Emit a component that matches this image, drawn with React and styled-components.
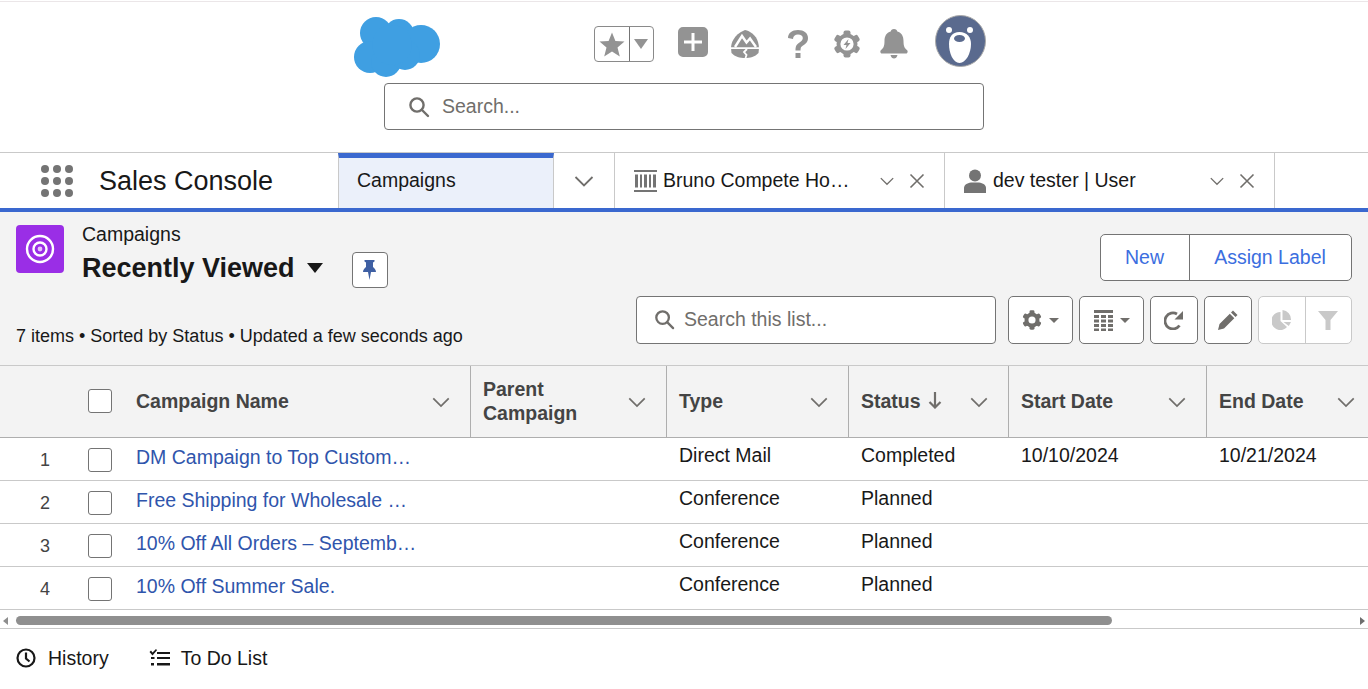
import React from "react";
import styled, { createGlobalStyle } from "styled-components";

const Global = createGlobalStyle`
  html, body { margin: 0; padding: 0; background: #fff; overflow: hidden; }
  body { font-family: "Liberation Sans", Arial, sans-serif; color: #181818; }
  * { box-sizing: border-box; }
`;

const Page = styled.div`
  width: 1368px;
  height: 689px;
  display: flex;
  flex-direction: column;
  overflow: hidden;
`;

/* ---------- Global header ---------- */
const Header = styled.header`
  height: 152px;
  flex: none;
  margin-top: 1px;
  border-top: 1px solid #ebe6e8;
  border-bottom: 1px solid #c9c9c9;
  background: #fff;
  padding: 12px 0 0 354px;
`;
const TopRow = styled.div`
  height: 69px;
  display: flex;
  align-items: flex-start;
`;
const Logo = styled.svg`
  width: 86px;
  height: 60px;
  margin-top: 3px;
  flex: none;
`;
const FavGroup = styled.div`
  display: flex;
  width: 60px;
  height: 36px;
  margin: 12px 0 0 154px;
  border: 1px solid #8a8a8a;
  border-radius: 4px;
  flex: none;
`;
const FavCell = styled.div`
  flex: ${(p) => p.$flex};
  display: flex;
  align-items: center;
  justify-content: center;
  & + & { border-left: 1px solid #747474; }
`;
const HeadIcon = styled.svg`
  flex: none;
  width: ${(p) => p.$w}px;
  height: ${(p) => p.$h}px;
  margin-left: ${(p) => p.$ml}px;
  margin-top: ${(p) => p.$mt}px;
  fill: #939393;
`;
const GlobalSearch = styled.div`
  width: 600px;
  height: 47px;
  margin-left: 30px;
  border: 1px solid #747474;
  border-radius: 4px;
  display: flex;
  align-items: center;
  padding-left: 23px;
  gap: 12px;
  font-size: 19.5px;
  color: #706e6b;
  background: #fff;
`;

/* ---------- Tabs ---------- */
const TabBar = styled.nav`
  height: 59px;
  flex: none;
  display: flex;
  border-bottom: 4px solid #3a68cf;
  background: #fff;
`;
const AppArea = styled.div`
  width: 338px;
  flex: none;
  display: flex;
  align-items: center;
  padding-left: 41px;
`;
const Waffle = styled.div`
  display: grid;
  grid-template-columns: repeat(3, 8px);
  gap: 4px;
  width: 32px;
  margin-right: 26px;
`;
const Dot = styled.i`
  width: 8px;
  height: 8px;
  border-radius: 50%;
  background: #747474;
`;
const AppName = styled.div`
  font-size: 27px;
  color: #181818;
  padding-top: 1px;
`;
const Tab = styled.div`
  width: ${(p) => p.$w}px;
  flex: none;
  display: flex;
  align-items: center;
  font-size: 19.5px;
  padding-left: ${(p) => p.$pl}px;
  border-right: 1px solid #c9c9c9;
  justify-content: ${(p) => (p.$center ? "center" : "flex-start")};
  color: #181818;
`;
const ActiveTab = styled(Tab)`
  background: #ebf0fa;
  border-left: 1px solid #c9c9c9;
  border-top: 5px solid #3a68cf;
  padding-bottom: 5px;
`;
const TabLabel = styled.span`
  width: 187px;
  flex: none;
  white-space: nowrap;
  margin-left: ${(p) => p.$ml}px;
`;
const TabAction = styled.svg`
  flex: none;
  width: ${(p) => p.$s}px;
  height: ${(p) => p.$s}px;
  margin-left: ${(p) => p.$ml || 0}px;
  fill: none;
  stroke: #706e6b;
  stroke-width: ${(p) => p.$sw || 1.6};
`;

/* ---------- List header ---------- */
const ListHeader = styled.section`
  height: 154px;
  flex: none;
  background: #f3f3f3;
  padding: 13px 16px 0 16px;
  border-bottom: 1px solid #c9c9c9;
`;
const ListTop = styled.div`
  height: 71px;
  display: flex;
  justify-content: space-between;
`;
const TitleArea = styled.div`
  display: flex;
`;
const ObjectIcon = styled.div`
  width: 48px;
  height: 48px;
  background: #9a2ee6;
  border-radius: 4px;
  display: flex;
  align-items: center;
  justify-content: center;
  margin-right: 18px;
`;
const Crumb = styled.div`
  font-size: 19.5px;
  line-height: 20px;
  margin-top: -1px;
`;
const TitleRow = styled.div`
  display: flex;
  align-items: flex-start;
  margin-top: 8px;
`;
const Title = styled.div`
  font-size: 27px;
  font-weight: 700;
  line-height: 32px;
  white-space: nowrap;
`;
const Caret = styled.i`
  width: 0;
  height: 0;
  border-left: 8px solid transparent;
  border-right: 8px solid transparent;
  border-top: 10px solid #181818;
  margin: 11px 0 0 12px;
`;
const PinButton = styled.div`
  width: 36px;
  height: 36px;
  margin-left: 29px;
  background: #fff;
  border: 1px solid #747474;
  border-radius: 4px;
  display: flex;
  align-items: center;
  justify-content: center;
`;
const ActionGroup = styled.div`
  display: flex;
  height: 47px;
  margin-top: 9px;
  background: #fff;
  border: 1px solid #747474;
  border-radius: 5px;
`;
const ActionButton = styled.div`
  display: flex;
  align-items: center;
  justify-content: center;
  width: ${(p) => p.$w}px;
  padding-right: 1px;
  font-size: 19.5px;
  color: #3b6ee0;
  & + & { border-left: 1px solid #747474; }
`;
const ListBottom = styled.div`
  display: flex;
  justify-content: space-between;
  align-items: flex-start;
`;
const Meta = styled.div`
  font-size: 18px;
  line-height: 22px;
  margin-top: 29px;
`;
const Tools = styled.div`
  display: flex;
  gap: 6px;
`;
const ListSearch = styled.div`
  width: 360px;
  height: 48px;
  margin-right: 6px;
  background: #fff;
  border: 1px solid #747474;
  border-radius: 4px;
  display: flex;
  align-items: center;
  gap: 9px;
  padding: 0 0 2px 17px;
  font-size: 19.5px;
  color: #706e6b;
`;
const ToolButton = styled.div`
  width: ${(p) => p.$w}px;
  height: 48px;
  background: #fff;
  border: 1px solid #747474;
  border-radius: 5px;
  display: flex;
  align-items: center;
  justify-content: center;
  gap: 7px;
`;
const DisabledGroup = styled.div`
  width: 94px;
  height: 48px;
  display: flex;
  background: #fff;
  border: 1px solid #c9c9c9;
  border-radius: 5px;
`;
const DisabledCell = styled.div`
  flex: 1;
  display: flex;
  align-items: center;
  justify-content: center;
  & + & { border-left: 1px solid #c9c9c9; }
`;
const MiniCaret = styled.i`
  width: 0;
  height: 0;
  border-left: 5px solid transparent;
  border-right: 5px solid transparent;
  border-top: 5px solid #706e6b;
`;

/* ---------- Table ---------- */
const columns = "76px 48px 346px 196px 182px 160px 198px 162px";
const HeadRow = styled.div`
  height: 72px;
  display: grid;
  grid-template-columns: ${columns};
  background: #f3f3f3;
  border-bottom: 1px solid #aeaeae;
  flex: none;
`;
const HeadCell = styled.div`
  display: flex;
  align-items: center;
  justify-content: space-between;
  padding: 0 ${(p) => p.$pr ?? 19}px 0 ${(p) => p.$pl ?? 12}px;
  font-size: 19.5px;
  font-weight: 700;
  line-height: 24px;
  color: #444444;
  border-left: ${(p) => (p.$line ? "1px solid #aeaeae" : "none")};
`;
const HeadText = styled.span`
  display: flex;
  align-items: center;
  gap: 7px;
  white-space: pre-line;
  margin-top: -2px;
`;
const Row = styled.div`
  height: 43px;
  display: grid;
  grid-template-columns: ${columns};
  border-bottom: 1px solid #c9c9c9;
  background: #fff;
  flex: none;
  font-size: 19.5px;
  color: #181818;
`;
const NumCell = styled.div`
  font-size: 18px;
  color: #444;
  padding: 11px 26px 0 0;
  text-align: right;
  line-height: 22px;
`;
const BoxCell = styled.div`
  display: flex;
  justify-content: flex-start;
  padding-top: 10px;
  padding-left: 12px;
`;
const Box = styled.i`
  display: block;
  width: 24px;
  height: 24px;
  background: #fff;
  border: 1px solid #747474;
  border-radius: 3px;
`;
const HeadBoxCell = styled.div`
  display: flex;
  align-items: center;
  padding: 0 0 2px 12px;
`;
const LinkCell = styled.div`
  padding: 7px 0 0 12px;
  line-height: 24px;
  color: #2f55ac;
`;
const LinkText = styled.span`
  white-space: nowrap;
`;
const TextCell = styled.div`
  padding: 5px 0 0 13px;
  line-height: 24px;
  white-space: nowrap;
`;

/* ---------- Scrollbar + footer ---------- */
const Scrollbar = styled.div`
  height: 19px;
  flex: none;
  background: #fff;
  border-bottom: 1px solid #c9c9c9;
  display: flex;
  align-items: center;
  padding: 3px 3px 0 3px;
`;
const Arrow = styled.i`
  width: 0;
  height: 0;
  border-top: 4px solid transparent;
  border-bottom: 4px solid transparent;
  ${(p) => (p.$right ? "border-left: 5px solid #6e6e6e;" : "border-right: 5px solid #8e8e8e;")}
`;
const Thumb = styled.div`
  width: 1096px;
  height: 9px;
  margin-left: 8px;
  border-radius: 5px;
  background: #8f8f8f;
`;
const Spacer = styled.div`
  flex: 1;
`;
const Footer = styled.footer`
  flex: 1;
  display: flex;
  align-items: flex-start;
  padding: 17px 0 0 16px;
  background: #fff;
  font-size: 19.5px;
  color: #181818;
`;
const FootItem = styled.div`
  display: flex;
  align-items: center;
  line-height: 24px;
  gap: ${(p) => p.$gap}px;
  margin-right: ${(p) => p.$mr || 0}px;
`;

/* ---------- Icons ---------- */
const Chevron = ({ size = 22, ml, sw = 1.8 }) => (
  <TabAction viewBox="0 0 22 22" $s={size} $ml={ml} $sw={sw}>
    <path d="M2.5 7 L11 15.5 L19.5 7" />
  </TabAction>
);
const Close = ({ ml }) => (
  <TabAction viewBox="0 0 16 16" $s={16} $ml={ml} $sw={1.6}>
    <path d="M1.5 1.5 L14.5 14.5 M14.5 1.5 L1.5 14.5" />
  </TabAction>
);
const Magnifier = ({ size = 22 }) => (
  <svg width={size} height={size} viewBox="0 0 22 22" fill="none" stroke="#706e6b" strokeWidth="2.4">
    <circle cx="9" cy="9" r="6.6" />
    <path d="M14 14 L20 20" strokeLinecap="round" />
  </svg>
);
const GearShape = ({ fill, hole, children }) => (
  <>
    <circle cx="14" cy="14" r="10.5" fill={fill} />
    {[0, 60, 120].map((a) => (
      <rect key={a} x="10.5" y="0.5" width="7" height="27" rx="2" fill={fill} transform={`rotate(${a} 14 14)`} />
    ))}
    <circle cx="14" cy="14" r={hole} fill="#fff" />
    {children}
  </>
);

export default function App() {
  const rows = [
    ["1", "DM Campaign to Top Custom…", "Direct Mail", "Completed", "10/10/2024", "10/21/2024"],
    ["2", "Free Shipping for Wholesale …", "Conference", "Planned", "", ""],
    ["3", "10% Off All Orders – Septemb…", "Conference", "Planned", "", ""],
    ["4", "10% Off Summer Sale.", "Conference", "Planned", "", ""],
  ];
  const heads = [
    ["Campaign Name", 12, false, 19],
    ["Parent\nCampaign", 12, true, 19],
    ["Type", 12, true, 19],
    ["Status", 12, true, 19],
    ["Start Date", 12, true, 19],
    ["End Date", 12, true, 12],
  ];
  return (
    <Page>
      <Global />
      <Header>
        <TopRow>
          <Logo viewBox="354 17 86 60" fill="#3f9fe2">
            <circle cx="376" cy="33" r="16" />
            <circle cx="399" cy="34" r="15" />
            <circle cx="421" cy="44" r="19" />
            <circle cx="370" cy="57" r="16" />
            <circle cx="386" cy="62" r="15" />
            <circle cx="405" cy="55" r="15" />
            <circle cx="392" cy="45" r="20" />
          </Logo>
          <FavGroup>
            <FavCell $flex="35">
              <svg width="26" height="25" viewBox="0 0 26 25" fill="#939393">
                <path d="M13 0.5 L16.4 9 L25.5 9.6 L18.5 15.4 L20.8 24.4 L13 19.4 L5.2 24.4 L7.5 15.4 L0.5 9.6 L9.6 9 Z" />
              </svg>
            </FavCell>
            <FavCell $flex="24">
              <svg width="14" height="10" viewBox="0 0 14 10" fill="#939393">
                <path d="M0 0 H14 L7 10 Z" />
              </svg>
            </FavCell>
          </FavGroup>
          <HeadIcon $w={30} $h={30} $ml={24} $mt={13} viewBox="0 0 30 30">
            <path fillRule="evenodd" d="M5 0 H25 A5 5 0 0 1 30 5 V25 A5 5 0 0 1 25 30 H5 A5 5 0 0 1 0 25 V5 A5 5 0 0 1 5 0 Z M13.5 6 V13.5 H6 V16.5 H13.5 V24 H16.5 V16.5 H24 V13.5 H16.5 V6 Z" />
          </HeadIcon>
          <HeadIcon $w={28} $h={28} $ml={23} $mt={16} viewBox="0 0 28 28">
            <path d="M14 0 C19 1 25 5 27 12 C27.5 14 28 16 28 18 L27.5 23 C24 27 19 28 14 28 C9 28 4 27 0.5 23 L0 18 C0 14 2 5 14 0 Z" />
            <path d="M0 18.2 H28 M16 19 L13 22 L15.5 25 L14.5 28" fill="none" stroke="#fff" strokeWidth="1.800" />
            <path d="M4 17 L11 6 L15.500 12.500 L19 8.500 L25 17" fill="none" stroke="#fff" strokeWidth="2.400" />
          </HeadIcon>
          <HeadIcon $w={22} $h={30} $ml={28} $mt={15} viewBox="0 0 22 30">
            <path d="M1 9 C1 4 5 1 11 1 C17 1 21 4 21 9 C21 13 18.500 15 16 16.500 C14 17.800 13.500 18.500 13.500 21.500 H8.500 C8.500 17 9.500 15.500 12.500 13.500 C14.500 12.200 15.800 11 15.800 9 C15.800 7 14 5.500 11 5.500 C8 5.500 6.200 7 6 10 Z M8.500 24 H13.500 V29 H8.500 Z" />
          </HeadIcon>
          <HeadIcon $w={28} $h={28} $ml={24} $mt={16} viewBox="0 0 28 28">
            <GearShape fill="#939393" hole={6.6}>
              <path d="M15.500 9 L10.500 15 H13.500 L12.500 19 L17.500 13 H14.500 Z" fill="#939393" />
            </GearShape>
          </HeadIcon>
          <HeadIcon $w={28} $h={30} $ml={19} $mt={15} viewBox="0 0 28 30">
            <path d="M14 0 C16 0 17 1 17.300 2.500 C21.500 3.800 23.500 7 23.500 12 C23.500 18 25 19.500 27 21 C28 21.800 28 24.500 26 24.500 H2 C0 24.500 0 21.800 1 21 C3 19.500 4.500 18 4.500 12 C4.500 7 6.500 3.800 10.700 2.500 C11 1 12 0 14 0 Z M10.500 26 H17.500 C17 28.500 15.500 29.500 14 29.500 C12.500 29.500 11 28.500 10.500 26 Z" />
          </HeadIcon>
          <svg width="51" height="52" viewBox="0 0 51 52" style={{ marginLeft: 27, marginTop: 1, flex: "none" }}>
            <ellipse cx="25.500" cy="26" rx="25" ry="25.500" fill="#5a6a8e" stroke="#a9a9a9" strokeWidth="1" />
            <circle cx="14" cy="15" r="3" fill="#fff" />
            <circle cx="35" cy="15" r="3" fill="#fff" />
            <path d="M24.500 17 C32 17 36 22 36 29 C36 38 31 48 24.500 48 C18 48 14 38 14 29 C14 22 17 17 24.500 17 Z" fill="#fff" />
            <ellipse cx="24.500" cy="23.500" rx="5.500" ry="3.500" fill="#5a6a8e" />
          </svg>
        </TopRow>
        <GlobalSearch>
          <Magnifier />
          <span>Search...</span>
        </GlobalSearch>
      </Header>

      <TabBar>
        <AppArea>
          <Waffle>
            {Array.from({ length: 9 }).map((_, i) => (
              <Dot key={i} />
            ))}
          </Waffle>
          <AppName>Sales Console</AppName>
        </AppArea>
        <ActiveTab $w={216} $pl={18}>Campaigns</ActiveTab>
        <Tab $w={61} $pl={0} $center>
          <Chevron size={22} />
        </Tab>
        <Tab $w={330} $pl={19}>
          <svg width="23" height="22" viewBox="0 0 23 22" fill="#747474">
            <path d="M0 0 H23 V2 H0 Z M0 20 H23 V22 H0 Z M1 4.500 H4 V17.500 H1 Z M6 4.500 H8 V17.500 H6 Z M10 4.500 H13 V17.500 H10 Z M15 4.500 H17 V17.500 H15 Z M19 4.500 H22 V17.500 H19 Z" />
          </svg>
          <TabLabel $ml={6}>Bruno Compete Ho…</TabLabel>
          <Chevron size={16} ml={29} />
          <Close ml={14} />
        </Tab>
        <Tab $w={330} $pl={19}>
          <svg width="22" height="24" viewBox="0 0 22 24" fill="#747474">
            <circle cx="11" cy="6.500" r="6" />
            <path d="M0 24 V19 C0 16 3 14 7 13.500 H15 C19 14 22 16 22 19 V24 Z" />
          </svg>
          <TabLabel $ml={7}>dev tester | User</TabLabel>
          <Chevron size={16} ml={29} />
          <Close ml={14} />
        </Tab>
      </TabBar>

      <ListHeader>
        <ListTop>
          <TitleArea>
            <ObjectIcon>
              <svg width="30" height="30" viewBox="0 0 30 30" fill="none" stroke="#fff">
                <circle cx="15" cy="15" r="13" strokeWidth="2.400" />
                <circle cx="15" cy="15" r="6.500" strokeWidth="2.400" />
                <circle cx="15" cy="15" r="2.400" fill="#e6c6fa" stroke="none" />
              </svg>
            </ObjectIcon>
            <div>
              <Crumb>Campaigns</Crumb>
              <TitleRow>
                <Title>Recently Viewed</Title>
                <Caret />
                <PinButton>
                  <svg width="13" height="20" viewBox="0 0 13 20" fill="#3e5fa3">
                    <path d="M1.500 0 H11.500 V1.500 L10 2.500 V7 C11.500 8 13 10 13 12 H8 L6.500 20 L5 12 H0 C0 10 1.500 8 3 7 V2.500 L1.500 1.500 Z" />
                  </svg>
                </PinButton>
              </TitleRow>
            </div>
          </TitleArea>
          <ActionGroup>
            <ActionButton $w={88}>New</ActionButton>
            <ActionButton $w={162}>Assign Label</ActionButton>
          </ActionGroup>
        </ListTop>
        <ListBottom>
          <Meta>7 items • Sorted by Status • Updated a few seconds ago</Meta>
          <Tools>
            <ListSearch>
              <Magnifier size={21} />
              <span>Search this list...</span>
            </ListSearch>
            <ToolButton $w={65}>
              <svg width="20" height="20" viewBox="0 0 28 28">
                <GearShape fill="#706e6b" hole={5} />
              </svg>
              <MiniCaret />
            </ToolButton>
            <ToolButton $w={65}>
              <svg width="19" height="21" viewBox="0 0 19 21" fill="#706e6b">
                <path d="M0 0 H19 V3 H0 Z M0 5 H5 V8 H0 Z M7 5 H12 V8 H7 Z M14 5 H19 V8 H14 Z M0 9.500 H5 V12.500 H0 Z M7 9.500 H12 V12.500 H7 Z M14 9.500 H19 V12.500 H14 Z M0 14 H5 V17 H0 Z M7 14 H12 V17 H7 Z M14 14 H19 V17 H14 Z M0 18.500 H5 V21 H0 Z M7 18.500 H12 V21 H7 Z M14 18.500 H19 V21 H14 Z" />
              </svg>
              <MiniCaret />
            </ToolButton>
            <ToolButton $w={48}>
              <svg width="20" height="19" viewBox="0 0 20 19" fill="none" stroke="#706e6b" strokeWidth="2.800">
                <path d="M15.500 14.500 A8 8 0 1 1 13 3" />
                <path d="M19 0 V8.500 H10.500 Z" fill="#706e6b" stroke="none" />
              </svg>
            </ToolButton>
            <ToolButton $w={48}>
              <svg width="20" height="20" viewBox="0 0 20 20" fill="#706e6b">
                <path d="M15 0.500 L19.500 5 L17.500 7 L13 2.500 Z M11.800 3.700 L16.300 8.200 L6 18.500 L0 20 L1.500 14 Z" />
              </svg>
            </ToolButton>
            <DisabledGroup>
              <DisabledCell>
                <svg width="20" height="20" viewBox="0 0 20 20" fill="#c9c9c9">
                  <path d="M8.500 2 V11 L15 17 A9 9 0 1 1 8.500 2 Z M10.500 0 A9.500 9.500 0 0 1 19 10 H10.500 Z M11.500 12 H19 L16.800 16 Z" />
                </svg>
              </DisabledCell>
              <DisabledCell>
                <svg width="20" height="19" viewBox="0 0 20 19" fill="#c9c9c9">
                  <path d="M0 0 H20 L12.500 9 V19 H7.500 V9 Z" />
                </svg>
              </DisabledCell>
            </DisabledGroup>
          </Tools>
        </ListBottom>
      </ListHeader>

      <HeadRow>
        <div />
        <HeadBoxCell>
          <Box />
        </HeadBoxCell>
        {heads.map(([label, pl, line, pr]) => (
          <HeadCell key={label} $pl={pl} $line={line} $pr={pr}>
            <HeadText>
              {label}
              {label === "Status" && (
                <svg width="14" height="17" viewBox="0 0 14 17" fill="none" stroke="#706e6b" strokeWidth="2.200">
                  <path d="M7 0 V15 M1.500 10 L7 15.500 L12.500 10" />
                </svg>
              )}
            </HeadText>
            <Chevron size={20} sw={1.9} />
          </HeadCell>
        ))}
      </HeadRow>

      {rows.map((r) => (
        <Row key={r[0]}>
          <NumCell>{r[0]}</NumCell>
          <BoxCell>
            <Box />
          </BoxCell>
          <LinkCell>
            <LinkText>{r[1]}</LinkText>
          </LinkCell>
          <div />
          <TextCell>{r[2]}</TextCell>
          <TextCell>{r[3]}</TextCell>
          <TextCell>{r[4]}</TextCell>
          <TextCell>{r[5]}</TextCell>
        </Row>
      ))}

      <Scrollbar>
        <Arrow />
        <Thumb />
        <Spacer />
        <Arrow $right />
      </Scrollbar>

      <Footer>
        <FootItem $gap={12} $mr={40}>
          <svg width="20" height="20" viewBox="0 0 20 20" fill="none" stroke="#181818" strokeWidth="2.200">
            <circle cx="10" cy="10" r="8.500" />
            <path d="M10 4.500 V10.500 L13.500 13.500" />
          </svg>
          History
        </FootItem>
        <FootItem $gap={11}>
          <svg width="21" height="18" viewBox="0 0 21 18" fill="#181818">
            <path d="M0.500 3 L2 1.500 L3.500 3.500 L7 0 L8 1.300 L3.500 6.500 Z M8 3 H21 V5 H8 Z M2 8 L5.500 8 V10 H2 Z M8 8 H21 V10 H8 Z M2 14 H5 V16.500 H2 Z M8 14 H21 V16.500 H8 Z" />
          </svg>
          To Do List
        </FootItem>
      </Footer>
    </Page>
  );
}
